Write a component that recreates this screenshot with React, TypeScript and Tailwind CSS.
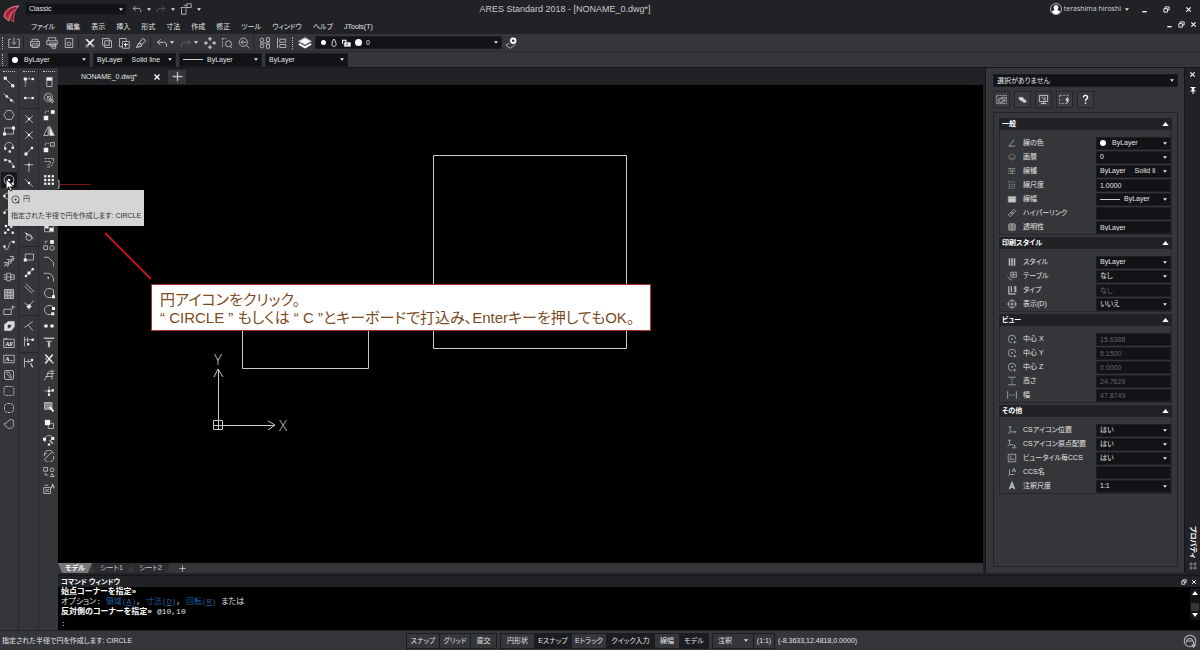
import { useState } from "react";
import type { ReactNode } from "react";

const CARET = (
    <svg viewBox="0 0 6 4" className="w-[4px] h-[3px] shrink-0 pointer-events-none" fill="#e8e8e8">
        <path d="M0 0h6L3 4z" />
    </svg>
);

// Small filled square used as a node handle in most icons
function N({ x, y, s = 3 }: { x: number; y: number; s?: number }) {
    return <rect x={x - s / 2} y={y - s / 2} width={s} height={s} fill="#f4f4f4" stroke="none" />;
}

function Icon({ children, className = "w-[14px] h-[14px]" }: { children: ReactNode; className?: string }) {
    return (
        <svg viewBox="0 0 16 16" fill="none" stroke="#b9babc" strokeWidth="1.2" className={`shrink-0 ${className}`}>
            {children}
        </svg>
    );
}

type Tool = { name: string; icon: ReactNode };

const drawTools: Tool[] = [
    { name: "線分", icon: <><path d="M3 3l10 10" /><N x={3} y={3} s={4} /><N x={13} y={13} s={4} /></> },
    { name: "無限線", icon: <><path d="M1 2l14 12" /><N x={5} y={6} /><N x={11} y={11} /></> },
    { name: "ポリゴン", icon: <path d="M5 2h6l4 6-4 6H5L1 8z" /> },
    { name: "長方形", icon: <><path d="M2 4h12v8H2z" /><N x={2} y={12} s={4} /><N x={14} y={4} s={4} /></> },
    { name: "円弧", icon: <><path d="M3 11C1 4 5 2 8 2s7 3 5 8" /><N x={3} y={10} /><N x={13} y={9} /><N x={9} y={14} /></> },
    { name: "3点円弧", icon: <><path d="M2 4c6-1 11 3 12 9" /><N x={3} y={4} /><N x={9} y={6} /><N x={14} y={13} /></> },
    { name: "円", icon: <><circle cx="8" cy="8" r="6.5" /><N x={8} y={8} /><N x={13} y={13} /></> },
    { name: "楕円", icon: <><ellipse cx="8" cy="8" rx="7" ry="4" /><N x={2} y={8} /><N x={14} y={8} /></> },
    { name: "楕円弧", icon: <><path d="M2 9c0-6 12-6 12 0" /><N x={2} y={9} /><N x={14} y={9} /></> },
    { name: "点", icon: <><N x={4} y={4} /><N x={11} y={5} /><N x={7} y={9} /><N x={3} y={13} /><N x={13} y={13} /></> },
    { name: "スプライン", icon: <><path d="M2 11c1 5 5 4 6-2s5-7 6-5" /><N x={2} y={10} /><N x={14} y={4} /></> },
    { name: "スケッチ", icon: <path d="M1 10h4l-3 5 6-4-2 5M5 6h4l-3 5 6-4-2 5M9 2h5l-4 5 5-3-2 4" /> },
    { name: "マルチライン", icon: <path d="M1 5h4M1 11h4M1 8h13M5 3h5v10H5zM10 5h5v6h-5" /> },
    { name: "ハッチング", icon: <><path d="M2 2h12v12H2z" fill="#77787a" /><path d="M2 6h12M2 10h12M6 2v12M10 2v12" stroke="#a9aaac" /></> },
    { name: "境界", icon: <path d="M1 7h10v7H1zM11 4h5M13 2v5" /> },
    { name: "リージョン", icon: <path d="M2 6l5-4h8v7l-4 5H2zM6 7v4h3l2-2V6H7z" fill="#dcdcdc" fillRule="evenodd" /> },
    { name: "ブロック文字", icon: <><path d="M1 3h14v11H1zM1 2h5" /><text x="3" y="12" fontSize="8" fontFamily="Liberation Serif" fontWeight="bold" fill="#eee" stroke="none">AF</text></> },
    { name: "注釈", icon: <><path d="M1 3h14v10H1zM10 10h3" /><text x="3" y="11" fontSize="8" fontFamily="Liberation Serif" fontWeight="bold" fill="#eee" stroke="none">A</text></> },
    { name: "編集", icon: <><rect x="2" y="2" width="12" height="12" rx="2" /><path d="M5 4h3l3 6v2L9 11 5 6z" /></> },
    { name: "雲マーク", icon: <rect x="1.5" y="2" width="13" height="12" rx="2" strokeDasharray="3 1" /> },
    { name: "雲マーク 円", icon: <rect x="2" y="2" width="12" height="12" rx="4" strokeDasharray="4 1" /> },
    { name: "自由形状", icon: <path d="M2 7c3 0 4-1 5-3s7-3 7 0-1 3 0 5-3 5-5 5-2-1-4-2-4-4-3-5z" /> },
];

const snapGroups: Tool[][] = [
    [
        { name: "寸法基準", icon: <><path d="M3 14V4h10M3 8h3M8 2v3" strokeDasharray="2 1" /><N x={3} y={4} s={4} /><N x={13} y={4} /></> },
        { name: "起点", icon: <><path d="M3 8h10" /><N x={3} y={8} /><N x={13} y={8} /></> },
    ],
    [
        { name: "交点", icon: <><path d="M3 3l10 10M3 13L13 4" /><N x={8} y={8} /></> },
        { name: "仮想交点", icon: <><path d="M3 3l10 10M3 13L13 3" /><N x={8} y={8} /></> },
        { name: "端点", icon: <><path d="M4 12l8-8" /><N x={4} y={12} s={4} /><N x={12} y={4} /></> },
        { name: "垂線", icon: <><path d="M2 5h12M8 2v13" /><N x={8} y={5} s={2} /></> },
        { name: "中点", icon: <><path d="M3 3l10 10" /><N x={8} y={8} /></> },
    ],
    [
        { name: "中心", icon: <circle cx="8" cy="8" r="5" /> },
        { name: "四半円", icon: <><circle cx="8" cy="8" r="5" /><N x={13} y={8} /></> },
        { name: "接線", icon: <><circle cx="8" cy="10" r="4" /><path d="M2 3l12 9" /><N x={5} y={5} s={2} /></> },
    ],
    [
        { name: "挿入基点", icon: <><path d="M3 4h11v8H3z" /><N x={3} y={12} s={4} /></> },
        { name: "点スナップ", icon: <><path d="M3 13L13 3" /><N x={4} y={12} /><N x={8} y={8} s={4} /><N x={13} y={3} /></> },
        { name: "平行", icon: <path d="M2 4l10 10M4 1l11 11" /> },
        { name: "近接点", icon: <><path d="M2 5l6 5 6-8M8 9v5" /><path d="M8 7l3 3-3 3-3-3z" fill="#eee" /></> },
    ],
    [
        { name: "解除", icon: <path d="M13 2L2 10M7 7l6 7" /> },
        { name: "延長", icon: <><path d="M2 1v13M2 5h11M6 2v6" /><N x={7} y={11} /><N x={13} y={5} /></> },
    ],
    [{ name: "スナップ設定", icon: <><path d="M2 1v13M2 6h9M7 3v5" /><path d="M10 8l3 6" strokeWidth="2" /><N x={12} y={4} /></> }],
];

const modifyTools: Tool[] = [
    { name: "削除", icon: <><path d="M5 2h7v12H5z" /><path d="M5 2h7v4H5z" fill="#eee" /></> },
    { name: "部分削除", icon: <><circle cx="7" cy="7" r="5.5" /><path d="M3 3l10 10" /><circle cx="8" cy="8" r="2.5" /><circle cx="12" cy="12" r="2" /></> },
    { name: "コピー", icon: <><N x={4} y={12} s={6} /><N x={13} y={4} s={5} /><path d="M3 6V3h5" strokeDasharray="2 1" /></> },
    { name: "鏡像", icon: <><path d="M7 2v12H1z" /><path d="M9 2v12h6z" fill="#eee" /></> },
    { name: "移動", icon: <><path d="M10 2h5v5h-5z" /><path d="M3 6V3h5" strokeDasharray="2 1" /><N x={4} y={12} s={6} /></> },
    { name: "オフセット", icon: <path d="M2 2h12v2c0 6-4 10-9 10M2 6h8c0 3-2 5-5 5" strokeDasharray="3 1" /> },
    { name: "パターン", icon: <>{[3, 8, 13].map((x) => [3, 8, 13].map((y) => <N key={`${x}-${y}`} x={x} y={y} />))}</> },
    { name: "回転", icon: <path d="M3 8a5 5 0 1 1 5 5M3 8l-2-2M3 8l2-2" /> },
    { name: "尺度", icon: <><path d="M2 2h12v12H2z" /><N x={5} y={11} s={5} /></> },
    { name: "ストレッチ", icon: <><path d="M2 3h12v10H2z" /><N x={5} y={6} s={5} /><N x={11} y={10} s={5} /></> },
    { name: "グループ", icon: <><path d="M1 9h5v5H1z" /><circle cx="12" cy="12" r="3" /><N x={12} y={4} s={5} /><path d="M3 6V3h3" /></> },
    { name: "面取り", icon: <path d="M1 3h6l7 7v5" /> },
    { name: "フィレット", icon: <><path d="M1 3h5c5 0 8 4 8 9v2" /><N x={7} y={9} s={2} /></> },
    { name: "結合", icon: <><path d="M14 13V4a9 9 0 0 0-6-2 5.5 5.5 0 0 0 0 12h4" /><N x={14} y={13} s={4} /></> },
    { name: "分割", icon: <><path d="M13 4a6 6 0 0 0-5-2 5.5 5.5 0 0 0 0 12h3" /><N x={14} y={6} s={4} /><N x={13} y={13} s={4} /></> },
    { name: "点で分割", icon: <><path d="M1 8h5M10 8h5" /><N x={4} y={8} s={4} /><N x={12} y={8} s={4} /></> },
    { name: "延長", icon: <><path d="M1 3h14" strokeWidth="2" /><path d="M8 7v8" strokeWidth="3" /><path d="M4 7h8" /></> },
    { name: "トリム", icon: <><path d="M3 2l9 10M13 2L3 14" strokeWidth="2" stroke="#eee" /><path d="M12 12l2 2M3 8h2" strokeWidth="2" /></> },
    { name: "ポリライン編集", icon: <path d="M1 14c6 0 4-11 8-11h6M5 6h10M3 10h10M12 1v13" /> },
    { name: "分解", icon: <><path d="M8 2v12M2 8h12" /><N x={8} y={13} /><N x={13} y={7} /><N x={8} y={8} /></> },
    { name: "ハッチ編集", icon: <><path d="M2 2h10v9H2z" fill="#8d8e90" /><path d="M9 8l5 6" stroke="#fff" strokeWidth="2.5" /></> },
    { name: "表示順序", icon: <><path d="M7 7h7v7H7z" /><N x={6} y={6} s={7} /></> },
    { name: "スプライン編集", icon: <><path d="M3 11C1 4 5 2 8 2s7 3 5 6" /><N x={2} y={7} s={4} /><N x={13} y={6} s={4} /><N x={8} y={14} /><path d="M9 8l4 5" strokeWidth="2" /></> },
    { name: "長さ変更", icon: <path d="M2 12L12 3M2 8a6 6 0 0 1 12-3M14 8a6 6 0 0 1-12 4M1 5h4" /> },
    { name: "変換", icon: <><path d="M1 2h5v5H1zM3 9v3h4" /><circle cx="12" cy="5" r="2.5" /><path d="M10 14l2-4 3 4z" /></> },
    { name: "注釈編集", icon: <><path d="M1 6h9v8H1zM3 8l5 4M8 8l-5 4M2 3h5" /><path d="M11 7l2-5 2 5" strokeWidth="1.5" /></> },
];

function ToolButton({ tool, active = false }: { tool: Tool; active?: boolean }) {
    return (
        <button
            type="button"
            aria-label={tool.name}
            className={`flex items-center justify-center w-[16px] h-[16px] ${active ? "bg-[#17181b]" : ""}`}
        >
            <Icon className="w-[12px] h-[12px]">{tool.icon}</Icon>
        </button>
    );
}

function Grip() {
    return <span className="w-[12px] h-0 border-t border-dotted border-[#c4c4c4] shrink-0" />;
}

function Drop({
    label,
    text,
    lead,
    className = "",
}: {
    label: string;
    text: string;
    lead?: ReactNode;
    className?: string;
}) {
    return (
        <div className={`flex items-center gap-1 px-[3px] bg-[#121317] border border-[#1d1e22] ${className}`}>
            {lead}
            <select
                aria-label={label}
                className="flex-1 min-w-0 h-full appearance-none bg-transparent text-[#e4e4e4] outline-none overflow-hidden"
            >
                <option>{text}</option>
            </select>
            {CARET}
        </div>
    );
}

const white = <span className="w-[6px] h-[6px] rounded-full bg-white shrink-0 mr-[2px]" />;
const rule = <span className="w-[20px] h-px bg-[#d0d0d0] shrink-0" />;

function BarButton({ name, children }: { name: string; children: ReactNode }) {
    return (
        <button type="button" aria-label={name} className="flex items-center justify-center w-[17px] h-[16px]">
            <Icon className="w-[12px] h-[12px]">{children}</Icon>
        </button>
    );
}

function Sep() {
    return <span className="w-px h-[14px] bg-[#232428] ml-px mr-[2px]" />;
}

function VGrip() {
    return <span className="w-0 h-[12px] border-l border-dotted border-[#b4b4b4] mx-[2px]" />;
}

const undo = <path d="M6 3L2 7l4 4M2 7h9c3 0 3 3 3 6" stroke="#d0d0d0" />;
const redo = <path d="M10 3l4 4-4 4M14 7H5c-3 0-3 3-3 6" stroke="#66676a" />;
const restore = <path d="M5 6V2h9v7h-4M2 6h8v8H2z" stroke="#fff" strokeWidth="2" />;
const cross = <path d="M3 3l10 10M13 3L3 13" stroke="#fff" strokeWidth="2.5" />;

function WindowButtons({ className }: { className: string }) {
    return (
        <div className={`flex items-center ${className}`}>
            <button type="button" aria-label="最小化">
                <Icon className="w-[7px] h-[7px]"><path d="M3 13h10" stroke="#fff" strokeWidth="3" /></Icon>
            </button>
            <button type="button" aria-label="元に戻す">
                <Icon className="w-[7px] h-[7px]">{restore}</Icon>
            </button>
            <button type="button" aria-label="閉じる">
                <Icon className="w-[7px] h-[7px]">{cross}</Icon>
            </button>
        </div>
    );
}

const menus = ["ファイル", "編集", "表示", "挿入", "形式", "寸法", "作成", "修正", "ツール", "ウィンドウ", "ヘルプ", "JTools(T)"];

function Header() {
    return (
        <header className="flex bg-[#202226] h-[34px] shrink-0">
            <svg viewBox="0 0 24 28" className="w-[24px] h-[28px] shrink-0">
                <path d="M19 6C10 6 4 11 4 17l5 4c0-5 3-10 10-15z" fill="#b92a43" stroke="#d98a96" strokeWidth="1" />
                <path d="M17 8c-5 4-7 8-6 12l3 2c-1-5 0-9 3-14z" fill="#7b1426" stroke="#c9505f" strokeWidth="1" />
                <path d="M7 15c2-4 6-6 9-7" stroke="#5f0f1d" fill="none" />
            </svg>
            <div className="flex-1 flex flex-col min-w-0">
                <div className="grid grid-cols-[39%_auto_1fr] items-center h-[18px] pr-[8px]">
                    <div className="flex items-center gap-[5px]">
                        <Drop label="ワークスペース" text="Classic" className="w-[102px] h-[12px] ml-px" />
                        <button type="button" aria-label="元に戻す"><Icon className="w-[10px] h-[10px]">{undo}</Icon></button>
                        {CARET}
                        <button type="button" aria-label="やり直し"><Icon className="w-[10px] h-[10px]">{redo}</Icon></button>
                        {CARET}
                        <button type="button" aria-label="カスタマイズ">
                            <Icon className="w-[12px] h-[12px]"><path d="M1 6h8M2 7v8h6V7M9 1h6v5H9zM5 3h4" /></Icon>
                        </button>
                        {CARET}
                    </div>
                    <h1 className="text-[9px] leading-[12px] text-[#c9c9c9]">ARES Standard 2018 - [NONAME_0.dwg*]</h1>
                    <div className="flex items-center justify-end">
                        <svg viewBox="0 0 12 12" className="w-[12px] h-[12px]">
                            <circle cx="6" cy="6" r="5.5" fill="none" stroke="#aaa" />
                            <path d="M6 2c3 0 3 4 1 5 2 0 3 1 3 2-2 3-6 3-8 0 0-1 1-2 3-2-2-1-2-5 1-5z" fill="#fff" />
                        </svg>
                        <button type="button" className="flex items-center gap-[4px] ml-[2px] font-['Open_Sans'] text-[#d6d6d6]">
                            terashima hiroshi {CARET}
                        </button>
                        <WindowButtons className="gap-[15px] ml-[12px]" />
                    </div>
                </div>
                <div className="flex items-start justify-between h-[16px] pr-[3px] shrink-0">
                    <nav className="flex gap-[11px] pl-[7px] pt-[4px] text-[#e4e4e4]">
                        {menus.map((m) => (
                            <button key={m} type="button">{m}</button>
                        ))}
                    </nav>
                    <WindowButtons className="gap-[5px] pt-[3px]" />
                </div>
            </div>
        </header>
    );
}

function Toolbars() {
    return (
        <div className="flex flex-col shrink-0 bg-[#35363a] border-b border-[#15161a]">
            <div className="flex items-center h-[18px] border-b border-[#2a2b2f]">
                <VGrip />
                <BarButton name="新規"><path d="M4 3H1v11h14V3h-3M8 1v8M5 7l3 3 3-3" /></BarButton>
                <Sep />
                <BarButton name="印刷"><path d="M4 6V3h8v3M2 6h12v6H2zM4 9h8v5H4z" /></BarButton>
                <BarButton name="一括印刷"><path d="M3 5V1h10v4M1 5h14v5H1zM5 8h8v4H5zM8 12h5v3H8z" /></BarButton>
                <BarButton name="プレビュー"><path d="M3 2h10v12H3z" /><circle cx="8" cy="9" r="2.5" /></BarButton>
                <Sep />
                <BarButton name="切り取り"><path d="M3 3l8 8M13 3L5 11" stroke="#fff" strokeWidth="2" /><circle cx="4" cy="12" r="1.5" /><circle cx="12" cy="12" r="1.5" /></BarButton>
                <BarButton name="コピー"><path d="M2 2h9v9H2zM5 5h9v9H5z" /></BarButton>
                <BarButton name="貼り付け"><path d="M6 13H2V2h9v4M6 6h9v9H6z" /><path d="M10 8v5M8 10h5" stroke="#fff" /></BarButton>
                <BarButton name="プロパティコピー"><path d="M2 14l3-6 4 4zM6 7l5-5 3 3-5 5z" stroke="#ddd" /></BarButton>
                <Sep />
                <BarButton name="元に戻す">{undo}</BarButton>
                <span className="mr-[3px]">{CARET}</span>
                <BarButton name="やり直し">{redo}</BarButton>
                <span className="mr-[3px]">{CARET}</span>
                <BarButton name="画面移動"><path d="M8 1v4M8 11v4M1 8h4M11 8h4M6 3l2-2 2 2M6 13l2 2 2-2M3 6L1 8l2 2M13 6l2 2-2 2" strokeWidth="2" /></BarButton>
                <BarButton name="窓ズーム"><path d="M2 2v12M2 2h6" strokeDasharray="2 1" /><circle cx="10" cy="9" r="4" /><path d="M12 12l3 3" /></BarButton>
                <BarButton name="前画面ズーム"><circle cx="7" cy="7" r="5.5" /><path d="M11 11l4 4M11 7H4M7 4L4 7l3 3" /></BarButton>
                <Sep />
                <BarButton name="ツールパレット"><circle cx="4" cy="4" r="2.5" /><circle cx="4" cy="12" r="2.5" /><path d="M10 1h4v5h-4zM10 10h4v5h-4zM1 8h14" /></BarButton>
                <BarButton name="プロパティ"><path d="M2 1v14M5 3h8v4H5zM5 10h8v4H5z" /></BarButton>
                <VGrip />
                <button type="button" aria-label="画層" className="px-[3px]">
                    <Icon><path d="M1 6l7-4 7 4-7 4z" fill="#fff" /><path d="M1 9l7 4 7-4" stroke="#fff" strokeWidth="2" /></Icon>
                </button>
                <Drop
                    label="画層"
                    text="0"
                    className="w-[187px] h-[13px]"
                    lead={
                        <>
                            <span className="w-[5px] h-[5px] rounded-full bg-white ml-[2px]" />
                            <Icon className="w-[8px] h-[10px]"><path d="M8 0c6 9 5 15 0 15S2 9 8 0z" strokeWidth="2" stroke="#ddd" /></Icon>
                            <Icon className="w-[9px] h-[10px]"><path d="M1 9V3h6v4" strokeWidth="2" stroke="#fff" /><path d="M4 7h11v7H4z" fill="#fff" /><path d="M9 9v3" stroke="#121317" strokeWidth="2" /></Icon>
                            <span className="w-[7px] h-[7px] rounded-full bg-white" />
                        </>
                    }
                />
                <BarButton name="画層管理"><path d="M1 11l5-3M1 11l6 4 7-5" /><circle cx="11" cy="5" r="3" stroke="#fff" strokeWidth="2.5" /></BarButton>
            </div>
            <div className="flex items-center gap-[3px] h-[15px]">
                <VGrip />
                <Drop label="線色" text="ByLayer" lead={white} className="w-[82px] h-[14px]" />
                <Drop label="線種" text={"ByLayer\u2003 Solid line"} className="w-[83px] h-[14px]" />
                <Drop label="線幅" text="ByLayer" lead={rule} className="w-[83px] h-[14px]" />
                <Drop label="印刷スタイル" text="ByLayer" className="w-[83px] h-[14px]" />
            </div>
        </div>
    );
}

function ToolColumns() {
    return (
        <aside className="flex shrink-0 w-[58px] bg-[#35363a]">
            <div className="flex flex-col items-center w-[19px] pt-[3px] gap-[2px] border-r border-[#2a2b2f]">
                <Grip />
                <div className="flex flex-col justify-between h-[358px]">
                    {drawTools.map((t) => <ToolButton key={t.name} tool={t} active={t.name === "円"} />)}
                </div>
            </div>
            <div className="flex flex-col items-center w-[20px] pt-[3px] gap-[2px] border-r border-[#2a2b2f]">
                <Grip />
                <div className="flex flex-col w-full divide-y divide-[#25262a]">
                    {snapGroups.map((g, i) => (
                        <div key={i} className="flex flex-col items-center pb-[2px] not-first:pt-[2px]">
                            {g.map((t) => <ToolButton key={t.name} tool={t} />)}
                        </div>
                    ))}
                </div>
            </div>
            <div className="flex flex-col items-center w-[19px] pt-[3px] gap-[2px]">
                <Grip />
                <div className="flex flex-col justify-between h-[423px]">
                    {modifyTools.map((t) => <ToolButton key={t.name} tool={t} />)}
                </div>
            </div>
        </aside>
    );
}

function Drawing() {
    return (
        <main className="relative flex-1 bg-black overflow-hidden">
            <svg className="block w-full h-full" fill="none" stroke="#c8c8c8">
                <path d="M375.5 70.5h193v193h-193z" />
                <path d="M184.5 200.5h126v83h-126z" />
                <path d="M155.5 335.5h9v9h-9zM160.5 345v-61M156 292l4-8 5 8M155 340.5h62M210 336l7 4-7 5" />
                <g fill="#c8c8c8" stroke="none" fontSize="15" textAnchor="middle" className="font-['Open_Sans'] font-light">
                    <text x="160" y="280">Y</text>
                    <text x="225" y="346">X</text>
                </g>
                <path d="M0 95.5h1v8H0" />
                <path d="M2 99.5h31" stroke="#7a1414" />
                <path d="M47 148l46 46" stroke="#c4161c" strokeWidth="2" />
            </svg>
            <div className="absolute left-[93px] top-[199px] w-[500px] h-[47px] pl-[8px] pt-[6px] bg-white border border-[#a8322c] text-[#7d4a22] text-[15px] leading-[18px] whitespace-nowrap">
                <p>円アイコンをクリック。</p>
                <p>“ CIRCLE ” もしくは “ C ”とキーボードで打込み、Enterキーを押してもOK。</p>
            </div>
        </main>
    );
}

type Prop = { label: string; value: string; kind?: "drop" | "off"; lead?: ReactNode; icon: ReactNode };

const centre = <><path d="M14 8a6 6 0 1 0-6 6M12 11v4M10 13h5" /><N x={8} y={8} s={2} /></>;

const sections: { title: string; rows: Prop[] }[] = [
    {
        title: "一般",
        rows: [
            { label: "線の色", value: "ByLayer", kind: "drop", lead: white, icon: <path d="M11 3L3 13h10" /> },
            { label: "画層", value: "0", kind: "drop", icon: <path d="M2 7l6-4 6 4-6 4zM2 10l6 3 6-3" stroke="#7c7d80" /> },
            { label: "線種", value: "ByLayer\u2003 Solid li", kind: "drop", icon: <path d="M2 4h12M2 8h12M2 12h12M5 4l3 7 3-7" strokeDasharray="2 1" /> },
            { label: "線尺度", value: "1.0000", icon: <path d="M2 3h12M2 13h12M3 7h10M3 10h10" strokeDasharray="2 2" /> },
            { label: "線幅", value: "ByLayer", kind: "drop", lead: rule, icon: <path d="M2 4h12v9H2zM2 7h12" fill="#ccc" stroke="#999" /> },
            { label: "ハイパーリンク", value: "", icon: <path d="M7 6l4-4 3 3-4 4zM6 7l-4 4 3 3 4-4zM6 10l4-4" /> },
            { label: "透明性", value: "ByLayer", icon: <path d="M3 3h10v10H3zM8 2v12M2 8h12M3 5h10M3 11h10" /> },
        ],
    },
    {
        title: "印刷スタイル",
        rows: [
            { label: "スタイル", value: "ByLayer", kind: "drop", icon: <path d="M4 2v12M8 2v12M12 2v12" strokeWidth="2.5" /> },
            { label: "テーブル", value: "なし", kind: "drop", icon: <path d="M6 2h9v8H6zM6 6h9M10 2v8M1 9l4 5h3" /> },
            { label: "タイプ", value: "なし", kind: "off", icon: <path d="M3 2v12h11M7 2v9M11 3h3v7h-3M11 6h3" strokeWidth="2" /> },
            { label: "表示(D)", value: "いいえ", kind: "drop", icon: <><circle cx="8" cy="8" r="6" /><path d="M0 8h16M8 0v16" /></> },
        ],
    },
    {
        title: "ビュー",
        rows: [
            { label: "中心 X", value: "15.6388", kind: "off", icon: centre },
            { label: "中心 Y", value: "5.1500", kind: "off", icon: centre },
            { label: "中心 Z", value: "0.0000", kind: "off", icon: centre },
            { label: "高さ", value: "24.7629", kind: "off", icon: <path d="M2 2h12M2 14h12M8 4v3M8 9v3" /> },
            { label: "幅", value: "47.8749", kind: "off", icon: <path d="M1 2v12M15 2v12M4 8h3M9 8h3" /> },
        ],
    },
    {
        title: "その他",
        rows: [
            { label: "CSアイコン位置", value: "はい", kind: "drop", icon: <path d="M5 2v9h9M5 11l-3 3M3 4l2-2 2 2M12 9l2 2-2 2" /> },
            { label: "CSアイコン原点配置", value: "はい", kind: "drop", icon: <><path d="M4 1v8h6M4 9l-3 3M2 3l2-2 2 2M8 14h7" /><N x={12} y={11} s={2} /></> },
            { label: "ビュータイル毎CCS", value: "はい", kind: "drop", icon: <path d="M2 2h12v12H2zM6 4v6h6M6 10l-2 2" /> },
            { label: "CCS名", value: "", icon: <path d="M4 4v8h8M4 12l-2 2M8 8l3-6 3 6M9 6h4" /> },
            { label: "注釈尺度", value: "1:1", kind: "drop", icon: <path d="M4 13L8 3l4 10M6 10h4" strokeWidth="2.5" /> },
        ],
    },
];

function PropertyRow({ row }: { row: Prop }) {
    return (
        <div className="flex items-center h-[14px]">
            <span className="w-[23px] flex justify-center">
                <Icon className="w-[10px] h-[10px]">{row.icon}</Icon>
            </span>
            <span className="flex-1 text-[#e2e2e2] whitespace-nowrap">{row.label}</span>
            {row.kind === "drop" ? (
                <Drop label={row.label} text={row.value} lead={row.lead} className="w-[75px] h-[13px]" />
            ) : (
                <input
                    aria-label={row.label}
                    defaultValue={row.value}
                    disabled={row.kind === "off"}
                    className="w-[75px] h-[13px] px-[3px] bg-[#121317] border border-[#1d1e22] text-[#e4e4e4] disabled:text-[#66676a]"
                />
            )}
        </div>
    );
}

const panelButtons: Tool[] = [
    { name: "選択追加", icon: <><path d="M1 2h14v12H1z" strokeDasharray="3 1" /><path d="M4 7h6v5H4zM8 7V5h5v5h-3" /></> },
    { name: "要素選択", icon: <><path d="M3 5h5l3 3v2H6L3 7z" fill="#ddd" /><path d="M8 9h5v3H9z" fill="#ddd" /></> },
    { name: "スマート選択", icon: <path d="M2 2h12v9H2zM5 4l6 6M8 11v3M4 14h8M10 4v4" stroke="#ddd" /> },
    { name: "クイック選択", icon: <><path d="M1 2h12v12H1z" strokeDasharray="3 2" /><path d="M13 4l-4 5h3l-2 5 5-6h-3z" fill="#fff" stroke="none" /></> },
    { name: "ヘルプ", icon: <path d="M5 5c0-4 6-4 6 0 0 2-3 2-3 5M8 12v2" stroke="#fff" strokeWidth="2" /> },
];

function PropertiesPanel() {
    const [closed, setClosed] = useState<string[]>([]);

    const toggle = (title: string) => {
        setClosed(closed.includes(title) ? closed.filter((t) => t !== title) : [...closed, title]);
    };

    return (
        <aside className="flex shrink-0 w-[215px] ml-[2px] border-l border-[#15161a]">
            <div className="flex-1 flex flex-col pl-[7px] pr-[6px] pt-[6px] pb-[6px] bg-[#35363a]">
                <Drop label="選択" text="選択がありません" className="h-[13px]" />
                <div className="flex gap-[4px] mt-[4px]">
                    {panelButtons.map((b) => (
                        <button
                            key={b.name}
                            type="button"
                            aria-label={b.name}
                            className="flex items-center justify-center w-[17px] h-[17px] bg-[#3a3b3f] border border-[#25262a]"
                        >
                            <Icon className="w-[11px] h-[11px]">{b.icon}</Icon>
                        </button>
                    ))}
                </div>
                <div className="flex-1 mt-[4px] px-[5px] pt-[5px] border border-[#222327]">
                    {sections.map((s) => (
                        <section key={s.title} className="pb-[2px]">
                            <button
                                type="button"
                                onClick={() => toggle(s.title)}
                                className="flex items-center justify-between w-full h-[12px] px-[3px] bg-[#202226] font-bold text-white"
                            >
                                {s.title}
                                <svg viewBox="0 0 8 5" className="w-[7px] h-[4px]" fill="#fff"><path d="M0 5h8L4 0z" /></svg>
                            </button>
                            {!closed.includes(s.title) && (
                                <div className="pt-[6px] border-x border-b border-[#27282c]">
                                    {s.rows.map((r) => <PropertyRow key={r.label} row={r} />)}
                                </div>
                            )}
                        </section>
                    ))}
                </div>
            </div>
            <div className="flex flex-col items-center justify-between w-[16px] py-[3px] bg-[#202226] border-l border-[#15161a]">
                <div className="flex flex-col gap-[8px]">
                    <button type="button" aria-label="閉じる"><Icon className="w-[7px] h-[7px]">{cross}</Icon></button>
                    <button type="button" aria-label="固定">
                        <Icon className="w-[8px] h-[9px]"><path d="M3 2h10M3 9h10M8 9v6" stroke="#fff" strokeWidth="2" /><path d="M8 2v7" stroke="#fff" strokeWidth="5" /></Icon>
                    </button>
                </div>
                <div className="flex flex-col items-center gap-[4px]">
                    <span className="[writing-mode:vertical-rl] [text-orientation:sideways] font-bold text-white">プロパティ</span>
                    <Icon className="w-[8px] h-[8px]"><path d="M2 2h4v4H2zM10 2h4v4h-4zM2 10h4v4H2zM10 10h4v4h-4z" /></Icon>
                </div>
            </div>
        </aside>
    );
}

function SheetTabs() {
    return (
        <div className="flex items-center h-[10px] bg-[#35363a] text-[#d0d0d0] leading-[10px]">
            <button type="button" className="w-[34px] h-full bg-[#77787a] font-bold text-white [clip-path:polygon(0_0,100%_0,88%_100%,12%_100%)]">モデル</button>
            <button type="button" className="w-[39px] h-full bg-[#2b2c30] [clip-path:polygon(0_0,100%_0,90%_100%,10%_100%)]">シート1</button>
            <button type="button" className="w-[39px] h-full bg-[#2b2c30] [clip-path:polygon(0_0,100%_0,90%_100%,10%_100%)]">シート2</button>
            <button type="button" aria-label="シート追加" className="flex items-center justify-center w-[24px] h-full">
                <Icon className="w-[7px] h-[7px]"><path d="M8 1v14M1 8h14" strokeWidth="2" /></Icon>
            </button>
        </div>
    );
}

function CommandWindow() {
    return (
        <section className="flex flex-col shrink-0 h-[55px] bg-black border-t border-[#15161a]">
            <div className="flex items-center justify-between h-[11px] pl-[3px] pr-[3px] bg-[#202226]">
                <h2 className="font-bold text-white">コマンド ウィンドウ</h2>
                <div className="flex gap-[4px]">
                    <button type="button" aria-label="フロート"><Icon className="w-[6px] h-[6px]">{restore}</Icon></button>
                    <button type="button" aria-label="閉じる"><Icon className="w-[6px] h-[6px]">{cross}</Icon></button>
                </div>
            </div>
            <div className="flex flex-1 justify-between">
                <div className="pl-[3px] text-[8px] leading-[10px] text-[#e0e0e0] whitespace-nowrap font-['Liberation_Mono','Noto_Sans_CJK_JP',monospace]">
                    <p className="font-bold text-white">始点コーナーを指定»</p>
                    <p>
                        オプション:{" "}
                        <a href="#area" className="text-[#1f5f9e]">領域(<u>A</u>)</a>,{" "}
                        <a href="#dim" className="text-[#1f5f9e]">寸法(<u>D</u>)</a>,{" "}
                        <a href="#rot" className="text-[#1f5f9e]">回転(<u>R</u>)</a> または
                    </p>
                    <p>
                        <b className="text-white">反対側のコーナーを指定»</b> @10,10
                    </p>
                    <label className="flex items-center h-[13px]">
                        :
                        <input aria-label="コマンド" className="ml-1 bg-transparent outline-none" />
                    </label>
                </div>
                <div className="flex flex-col items-center justify-between w-[10px] h-[32px] mt-px py-[3px] bg-[#121317]">
                    <svg viewBox="0 0 6 4" className="w-[6px] h-[4px]" fill="#fff"><path d="M0 4h6L3 0z" /></svg>
                    <span className="w-[8px] h-[8px] mt-[5px] bg-[#35363a]" />
                    <svg viewBox="0 0 6 4" className="w-[6px] h-[4px]" fill="#fff"><path d="M0 0h6L3 4z" /></svg>
                </div>
            </div>
        </section>
    );
}

function StatusBar() {
    const [on, setOn] = useState(["Eスナップ", "クイック入力", "モデル"]);

    const toggle = (name: string) => {
        setOn(on.includes(name) ? on.filter((n) => n !== name) : [...on, name]);
    };

    const groups = [
        [["スナップ", "w-[32px]"], ["グリッド", "w-[30px]"], ["直交", "w-[25px]"]],
        [["円形状", "w-[33px]"], ["Eスナップ", "w-[36px]"], ["Eトラック", "w-[34px]"], ["クイック入力", "w-[47px]"], ["線幅", "w-[24px]"], ["モデル", "w-[28px]"]],
    ];

    return (
        <footer className="flex items-center shrink-0 h-[20px] bg-[#35363a] border-t border-[#222327] text-[#e2e2e2] whitespace-nowrap">
            <span className="w-[406px] pl-[2px]">指定された半径で円を作成します: CIRCLE</span>
            {groups.map((g, i) => (
                <div key={i} className="flex gap-px p-px mr-[3px] bg-[#1b1c20]">
                    {g.map(([name, width]) => (
                        <button
                            key={name}
                            type="button"
                            onClick={() => toggle(name)}
                            className={`h-[14px] ${width} ${on.includes(name) ? "bg-[#1b1c20]" : "bg-[#35363a]"}`}
                        >
                            {name}
                        </button>
                    ))}
                </div>
            ))}
            <div className="flex gap-px p-px bg-[#1b1c20]">
                <button type="button" className="flex items-center justify-between w-[40px] h-[14px] px-[5px] bg-[#35363a]">
                    注釈 {CARET}
                </button>
                <button type="button" className="w-[20px] h-[14px] bg-[#35363a]">(1:1)</button>
            </div>
            <span className="flex-1 pl-[3px]">(-8.3633,12.4818,0.0000)</span>
            <button type="button" aria-label="設定" className="pr-[3px]">
                <Icon><circle cx="8" cy="8" r="6.5" /><path d="M4 10c0-6 7-6 7-2H5M12 8v6M10 12l2 3 3-3" /></Icon>
            </button>
        </footer>
    );
}

export default function App() {
    return (
        <div
            lang="ja"
            className="flex flex-col h-screen overflow-hidden bg-[#202226] text-[7px] leading-[10px] font-['Liberation_Sans','Noto_Sans_CJK_JP',sans-serif] [font-feature-settings:'palt']"
        >
            <Header />
            <Toolbars />
            <div className="relative flex flex-1 min-h-0">
                <ToolColumns />
                <div className="flex-1 flex flex-col min-w-0">
                    <div className="flex flex-1 min-h-0 mb-[2px]">
                        <div className="flex-1 flex flex-col min-w-0">
                            <div className="flex items-center h-[17px] text-[#e4e4e4]">
                                <div className="flex items-center justify-between w-[110px] pl-[23px] pr-[7px]">
                                    NONAME_0.dwg*
                                    <button type="button" aria-label="閉じる"><Icon className="w-[8px] h-[8px]">{cross}</Icon></button>
                                </div>
                                <button type="button" aria-label="新規タブ" className="flex items-center justify-center w-[18px] h-[14px] bg-[#35363a]">
                                    <Icon className="w-[11px] h-[11px]"><path d="M8 1v14M1 8h14" strokeWidth="2" /></Icon>
                                </button>
                            </div>
                            <Drawing />
                            <SheetTabs />
                        </div>
                        <PropertiesPanel />
                    </div>
                    <CommandWindow />
                </div>
                <div role="tooltip" className="absolute left-[8px] top-[122px] w-[136px] h-[36px] px-[3px] pt-[2px] bg-[#d5d5d5] text-[#333] whitespace-nowrap shadow">
                    <div className="flex items-center gap-[3px] h-[14px]">
                        <svg viewBox="0 0 16 16" className="w-[9px] h-[9px]" fill="none" stroke="#444" strokeWidth="1.5">
                            <circle cx="8" cy="8" r="6.5" />
                            <path d="M7 7h2v2H7zM12 12h2v2h-2z" fill="#222" />
                        </svg>
                        円
                    </div>
                    <p className="mt-[5px]">指定された半径で円を作成します: CIRCLE</p>
                </div>
                <svg viewBox="0 0 10 15" className="absolute left-[6px] top-[111px] w-[9px] h-[13px] pointer-events-none">
                    <path d="M0 0v12l3-3 2 5 2-1-2-4h4z" fill="#fff" stroke="#222" />
                </svg>
            </div>
            <StatusBar />
        </div>
    );
}
